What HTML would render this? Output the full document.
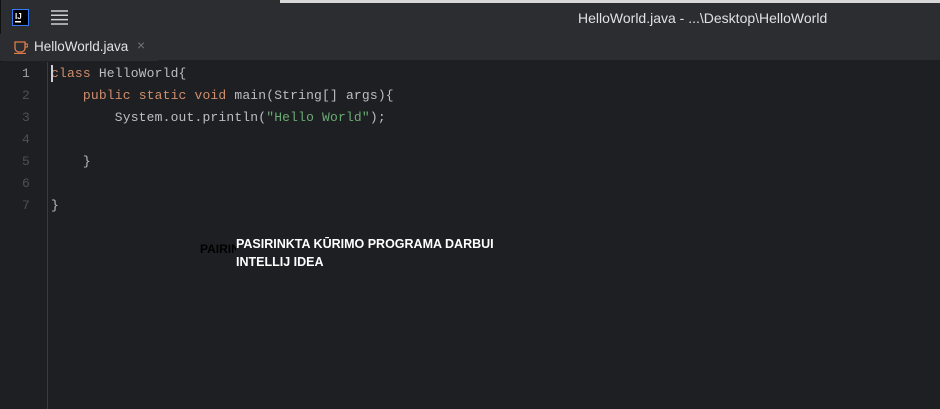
<!DOCTYPE html>
<html><head><meta charset="utf-8"><style>
*{margin:0;padding:0;box-sizing:border-box}
body{width:940px;height:409px;background:#1e1f22;overflow:hidden;position:relative;font-family:"Liberation Sans",sans-serif}
#hdr{position:absolute;left:0;top:0;width:940px;height:34px;background:#2b2d30}
#strip{position:absolute;left:280px;top:0;width:660px;height:3px;background:#d8d8d8}
#tabs{position:absolute;left:0;top:34px;width:940px;height:27px;background:#2b2d30;border-bottom:1px solid #1e1f22}
#tab{position:absolute;left:0;top:0;width:158px;height:27px;background:#2b2d30}
.mono{font-family:"Liberation Mono",monospace;font-size:13px;letter-spacing:0.17px}
#gut{position:absolute;left:0;top:62px;width:48px;height:347px;border-right:1px solid #393b40;background:#1e1f22}
.ln{position:absolute;left:0;width:30px;text-align:right;color:#4b5059}
.cl{position:absolute;left:51px;color:#bcbec4;white-space:pre}
.k{color:#cf8e6d}.s{color:#6aab73}
#lb{position:absolute;left:0;top:0;width:1px;height:409px;background:#111}
</style></head><body>
<div id="hdr"></div>
<div id="strip"></div>
<div id="lb"></div>
<svg style="position:absolute;left:12px;top:9px" width="17" height="17"><rect x="0.5" y="0.5" width="16" height="16" fill="#000" stroke="#2f7cf6"/><text x="3" y="10" fill="#fff" font-size="8" font-weight="bold" font-family="Liberation Sans">IJ</text><rect x="3" y="12" width="6" height="1.5" fill="#fff"/></svg>
<svg style="position:absolute;left:51px;top:10px" width="17" height="15"><g stroke="#ced0d6" stroke-width="1.5"><line x1="0" y1="1" x2="17" y2="1"/><line x1="0" y1="5.3" x2="17" y2="5.3"/><line x1="0" y1="9.6" x2="17" y2="9.6"/><line x1="0" y1="14" x2="17" y2="14"/></g></svg>
<div style="position:absolute;left:578px;top:10px;color:#dfe1e5;font-size:14px">HelloWorld.java - ...\Desktop\HelloWorld</div>
<div id="tabs"><div id="tab">
<svg style="position:absolute;left:14px;top:7px" width="14" height="13"><path d="M1 1h10v6a4 4 0 0 1-4 4H5a4 4 0 0 1-4-4z M11 3h1.5a1.5 1.5 0 0 1 0 3H11 M0 12.5h12" fill="none" stroke="#e07c4a" stroke-width="1.3"/></svg>
<span style="position:absolute;left:34px;top:5px;color:#dfe1e5;font-size:13.5px">HelloWorld.java</span>
<span style="position:absolute;left:137px;top:3px;color:#6f737a;font-size:14px">×</span>
</div></div>
<div id="gut"></div>
<div class="mono">
<div class="ln" style="top:66px;color:#a1a3ab">1</div>
<div class="ln" style="top:88px">2</div>
<div class="ln" style="top:110px">3</div>
<div class="ln" style="top:132px">4</div>
<div class="ln" style="top:154px">5</div>
<div class="ln" style="top:176px">6</div>
<div class="ln" style="top:198px">7</div>
<div class="cl" style="top:66px"><span class="k">class</span> HelloWorld{</div>
<div style="position:absolute;left:51px;top:65px;width:2px;height:17px;background:#ced0d6"></div>
<div class="cl" style="top:88px">    <span class="k">public static void</span> main(String[] args){</div>
<div class="cl" style="top:110px">        System.out.println(<span class="s">"Hello World"</span>);</div>
<div class="cl" style="top:154px">    }</div>
<div class="cl" style="top:198px">}</div>
</div>
<div style="position:absolute;left:200px;top:242px;color:#000;font-size:12px;font-weight:bold">PAIRINKTA</div>
<div style="position:absolute;left:236px;top:235px;color:#fff;font-size:12.5px;font-weight:bold;line-height:18px;background:#1e1f22;padding-right:4px">PASIRINKTA KŪRIMO PROGRAMA DARBUI<br>INTELLIJ IDEA</div>
</body></html>
